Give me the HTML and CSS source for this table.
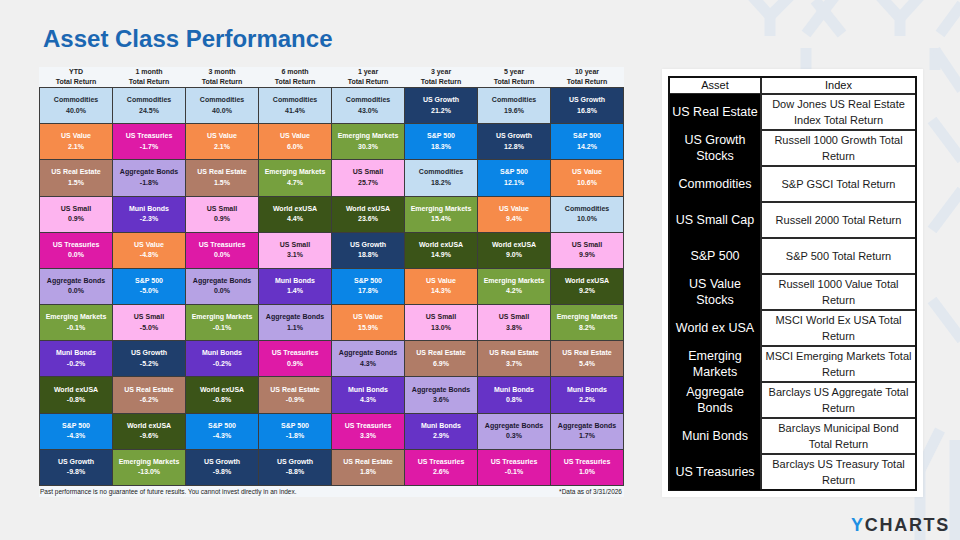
FILE: index.html
```html
<!DOCTYPE html>
<html lang="en">
<head>
<meta charset="utf-8">
<title>Asset Class Performance</title>
<link rel="stylesheet" href="styles.css">
</head>
<body>
<svg class="watermark" width="960" height="540" viewBox="0 0 960 540" aria-hidden="true">
  <g fill="none" stroke="#e2e8ef" stroke-width="11" stroke-linecap="butt">
    <path d="M752 -4 L770 16 L770 36"/>
    <path d="M790 -4 L770 16"/>
    <path d="M806 48 L806 70"/>
    <path d="M806 34 L835 -4"/>
    <path d="M842 34 L815 0"/>
    <path d="M880 -4 L900 18 L900 36"/>
    <path d="M920 -4 L900 18"/>
    <path d="M940 34 L962 4"/>
    <path d="M935 48 L935 70"/>
    <path d="M935 50 L962 90"/>
    <path d="M932 120 L962 160"/>
    <path d="M932 230 L962 190"/>
    <path d="M932 300 L962 340"/>
    <path d="M900 430 L920 470 L920 540"/>
    <path d="M940 430 L920 470"/>
    <path d="M955 440 L955 540"/>
  </g>
</svg>
<div class="page">
  <section class="left">
    <h1 class="title">Asset Class Performance</h1>
    <div class="perf">
      <div class="perf-head">
        <div class="hcell">YTD<br>Total Return</div>
        <div class="hcell">1 month<br>Total Return</div>
        <div class="hcell">3 month<br>Total Return</div>
        <div class="hcell">6 month<br>Total Return</div>
        <div class="hcell">1 year<br>Total Return</div>
        <div class="hcell">3 year<br>Total Return</div>
        <div class="hcell">5 year<br>Total Return</div>
        <div class="hcell">10 year<br>Total Return</div>
      </div>
      <div class="perf-grid">
        <div class="cell c-com">Commodities<br>40.0%</div>
        <div class="cell c-com">Commodities<br>24.5%</div>
        <div class="cell c-com">Commodities<br>40.0%</div>
        <div class="cell c-com">Commodities<br>41.4%</div>
        <div class="cell c-com">Commodities<br>43.0%</div>
        <div class="cell c-gr">US Growth<br>21.2%</div>
        <div class="cell c-com">Commodities<br>19.6%</div>
        <div class="cell c-gr">US Growth<br>16.8%</div>

        <div class="cell c-val">US Value<br>2.1%</div>
        <div class="cell c-tre">US Treasuries<br>-1.7%</div>
        <div class="cell c-val">US Value<br>2.1%</div>
        <div class="cell c-val">US Value<br>6.0%</div>
        <div class="cell c-em">Emerging Markets<br>30.3%</div>
        <div class="cell c-sp">S&amp;P 500<br>18.3%</div>
        <div class="cell c-gr">US Growth<br>12.8%</div>
        <div class="cell c-sp">S&amp;P 500<br>14.2%</div>

        <div class="cell c-re">US Real Estate<br>1.5%</div>
        <div class="cell c-agg">Aggregate Bonds<br>-1.8%</div>
        <div class="cell c-re">US Real Estate<br>1.5%</div>
        <div class="cell c-em">Emerging Markets<br>4.7%</div>
        <div class="cell c-sm">US Small<br>25.7%</div>
        <div class="cell c-com">Commodities<br>18.2%</div>
        <div class="cell c-sp">S&amp;P 500<br>12.1%</div>
        <div class="cell c-val">US Value<br>10.6%</div>

        <div class="cell c-sm">US Small<br>0.9%</div>
        <div class="cell c-mun">Muni Bonds<br>-2.3%</div>
        <div class="cell c-sm">US Small<br>0.9%</div>
        <div class="cell c-wx">World exUSA<br>4.4%</div>
        <div class="cell c-wx">World exUSA<br>23.6%</div>
        <div class="cell c-em">Emerging Markets<br>15.4%</div>
        <div class="cell c-val">US Value<br>9.4%</div>
        <div class="cell c-com">Commodities<br>10.0%</div>

        <div class="cell c-tre">US Treasuries<br>0.0%</div>
        <div class="cell c-val">US Value<br>-4.8%</div>
        <div class="cell c-tre">US Treasuries<br>0.0%</div>
        <div class="cell c-sm">US Small<br>3.1%</div>
        <div class="cell c-gr">US Growth<br>18.8%</div>
        <div class="cell c-wx">World exUSA<br>14.9%</div>
        <div class="cell c-wx">World exUSA<br>9.0%</div>
        <div class="cell c-sm">US Small<br>9.9%</div>

        <div class="cell c-agg">Aggregate Bonds<br>0.0%</div>
        <div class="cell c-sp">S&amp;P 500<br>-5.0%</div>
        <div class="cell c-agg">Aggregate Bonds<br>0.0%</div>
        <div class="cell c-mun">Muni Bonds<br>1.4%</div>
        <div class="cell c-sp">S&amp;P 500<br>17.8%</div>
        <div class="cell c-val">US Value<br>14.3%</div>
        <div class="cell c-em">Emerging Markets<br>4.2%</div>
        <div class="cell c-wx">World exUSA<br>9.2%</div>

        <div class="cell c-em">Emerging Markets<br>-0.1%</div>
        <div class="cell c-sm">US Small<br>-5.0%</div>
        <div class="cell c-em">Emerging Markets<br>-0.1%</div>
        <div class="cell c-agg">Aggregate Bonds<br>1.1%</div>
        <div class="cell c-val">US Value<br>15.9%</div>
        <div class="cell c-sm">US Small<br>13.0%</div>
        <div class="cell c-sm">US Small<br>3.8%</div>
        <div class="cell c-em">Emerging Markets<br>8.2%</div>

        <div class="cell c-mun">Muni Bonds<br>-0.2%</div>
        <div class="cell c-gr">US Growth<br>-5.2%</div>
        <div class="cell c-mun">Muni Bonds<br>-0.2%</div>
        <div class="cell c-tre">US Treasuries<br>0.9%</div>
        <div class="cell c-agg">Aggregate Bonds<br>4.3%</div>
        <div class="cell c-re">US Real Estate<br>6.9%</div>
        <div class="cell c-re">US Real Estate<br>3.7%</div>
        <div class="cell c-re">US Real Estate<br>5.4%</div>

        <div class="cell c-wx">World exUSA<br>-0.8%</div>
        <div class="cell c-re">US Real Estate<br>-6.2%</div>
        <div class="cell c-wx">World exUSA<br>-0.8%</div>
        <div class="cell c-re">US Real Estate<br>-0.9%</div>
        <div class="cell c-mun">Muni Bonds<br>4.3%</div>
        <div class="cell c-agg">Aggregate Bonds<br>3.6%</div>
        <div class="cell c-mun">Muni Bonds<br>0.8%</div>
        <div class="cell c-mun">Muni Bonds<br>2.2%</div>

        <div class="cell c-sp">S&amp;P 500<br>-4.3%</div>
        <div class="cell c-wx">World exUSA<br>-9.6%</div>
        <div class="cell c-sp">S&amp;P 500<br>-4.3%</div>
        <div class="cell c-sp">S&amp;P 500<br>-1.8%</div>
        <div class="cell c-tre">US Treasuries<br>3.3%</div>
        <div class="cell c-mun">Muni Bonds<br>2.9%</div>
        <div class="cell c-agg">Aggregate Bonds<br>0.3%</div>
        <div class="cell c-agg">Aggregate Bonds<br>1.7%</div>

        <div class="cell c-gr">US Growth<br>-9.8%</div>
        <div class="cell c-em">Emerging Markets<br>-13.0%</div>
        <div class="cell c-gr">US Growth<br>-9.8%</div>
        <div class="cell c-gr">US Growth<br>-8.8%</div>
        <div class="cell c-re">US Real Estate<br>1.8%</div>
        <div class="cell c-tre">US Treasuries<br>2.6%</div>
        <div class="cell c-tre">US Treasuries<br>-0.1%</div>
        <div class="cell c-tre">US Treasuries<br>1.0%</div>
      </div>
      <div class="perf-foot">
        <span>Past performance is no guarantee of future results. You cannot invest directly in an index.</span>
        <span>*Data as of 3/31/2026</span>
      </div>
    </div>
  </section>
  <aside class="right">
    <div class="panel">
      <div class="legend">
        <div class="lh">Asset</div>
        <div class="lh">Index</div>
        <div class="la">US Real Estate</div>
        <div class="li">Dow Jones US Real Estate<br>Index Total Return</div>
        <div class="la">US Growth<br>Stocks</div>
        <div class="li">Russell 1000 Growth Total<br>Return</div>
        <div class="la">Commodities</div>
        <div class="li">S&amp;P GSCI Total Return</div>
        <div class="la">US Small Cap</div>
        <div class="li">Russell 2000 Total Return</div>
        <div class="la">S&amp;P 500</div>
        <div class="li">S&amp;P 500 Total Return</div>
        <div class="la">US Value<br>Stocks</div>
        <div class="li">Russell 1000 Value Total<br>Return</div>
        <div class="la">World ex USA</div>
        <div class="li">MSCI World Ex USA Total<br>Return</div>
        <div class="la">Emerging<br>Markets</div>
        <div class="li">MSCI Emerging Markets Total<br>Return</div>
        <div class="la">Aggregate<br>Bonds</div>
        <div class="li">Barclays US Aggregate Total<br>Return</div>
        <div class="la">Muni Bonds</div>
        <div class="li">Barclays Municipal Bond<br>Total Return</div>
        <div class="la">US Treasuries</div>
        <div class="li">Barclays US Treasury Total<br>Return</div>
      </div>
    </div>
    <div class="logo"><span class="logo-y">Y</span>CHARTS</div>
  </aside>
</div>
</body>
</html>
```

FILE: styles.css
```css
html, body {
  margin: 0;
  padding: 0;
}

body {
  width: 960px;
  height: 540px;
  overflow: hidden;
  background: #f0f0f0;
  font-family: "Liberation Sans", Arial, sans-serif;
  position: relative;
}

.watermark {
  position: absolute;
  left: 0;
  top: 0;
  z-index: 0;
}

.page {
  position: relative;
  z-index: 1;
  display: flex;
  padding: 27px 0 0 39px;
  gap: 38px;
}

.left {
  width: 585px;
  display: flex;
  flex-direction: column;
}

.title {
  margin: 0 0 16px 4px;
  font-size: 24px;
  line-height: 24px;
  font-weight: bold;
  color: #1b67b2;
}

.perf {
  background: #f3f6f9;
}

.perf-head {
  display: grid;
  grid-template-columns: repeat(8, 1fr);
  height: 20px;
  padding: 0 1px;
  column-gap: 1px;
}

.hcell {
  text-align: center;
  font-size: 7px;
  line-height: 10px;
  font-weight: bold;
  color: #1f1f1f;
}

.perf-grid {
  display: grid;
  grid-template-columns: repeat(8, 1fr);
  grid-template-rows: repeat(11, 1fr);
  gap: 1px;
  padding: 1px;
  height: 399px;
  box-sizing: border-box;
  background: #3c3c3c;
}

.cell {
  display: flex;
  align-items: center;
  justify-content: center;
  text-align: center;
  font-size: 7px;
  line-height: 10.5px;
  font-weight: bold;
  color: #ffffff;
}

.c-com { background: #c3ddf2; color: #1f2a33; }
.c-val { background: #f68b4a; }
.c-tre { background: #de1aa6; }
.c-re  { background: #b07c67; }
.c-agg { background: #b6a2e4; color: #1c1830; }
.c-em  { background: #76a03e; }
.c-sm  { background: #fdb4ef; color: #2a1a28; }
.c-mun { background: #6633c6; }
.c-wx  { background: #3b5418; }
.c-sp  { background: #0a85e6; }
.c-gr  { background: #1f3e6c; }

.perf-foot {
  display: flex;
  justify-content: space-between;
  align-items: center;
  height: 11px;
  padding: 0 2px 0 1px;
  font-size: 6.5px;
  color: #1a1a1a;
}

.right {
  display: flex;
  flex-direction: column;
  margin-top: 42px;
}

.panel {
  width: 261px;
  height: 428px;
  box-sizing: border-box;
  padding: 7px 6px 6px 6px;
  background: #ffffff;
  box-shadow: 0 0 3px rgba(0, 0, 0, 0.06);
}

.legend {
  display: grid;
  grid-template-columns: 90px 1fr;
  grid-template-rows: 15px repeat(11, 1fr);
  gap: 2px;
  height: 415px;
  box-sizing: border-box;
  border: 2px solid #111111;
  background: #2a2a2a;
}

.lh {
  background: #ffffff;
  color: #111111;
  font-size: 11px;
  line-height: 15px;
  text-align: center;
}

.la {
  background: #000000;
  color: #ffffff;
  font-size: 12.5px;
  line-height: 16px;
  display: flex;
  align-items: center;
  justify-content: center;
  text-align: center;
  margin: -1px 0;
}

.li {
  background: #ffffff;
  color: #1a1a1a;
  font-size: 11px;
  line-height: 16px;
  display: flex;
  align-items: center;
  justify-content: center;
  text-align: center;
}

.logo {
  align-self: flex-end;
  margin: 19px -27px 0 0;
  font-size: 18px;
  line-height: 18px;
  font-weight: bold;
  letter-spacing: 1.7px;
  color: #2f3237;
}

.logo-y {
  color: #1f90e3;
}
```
